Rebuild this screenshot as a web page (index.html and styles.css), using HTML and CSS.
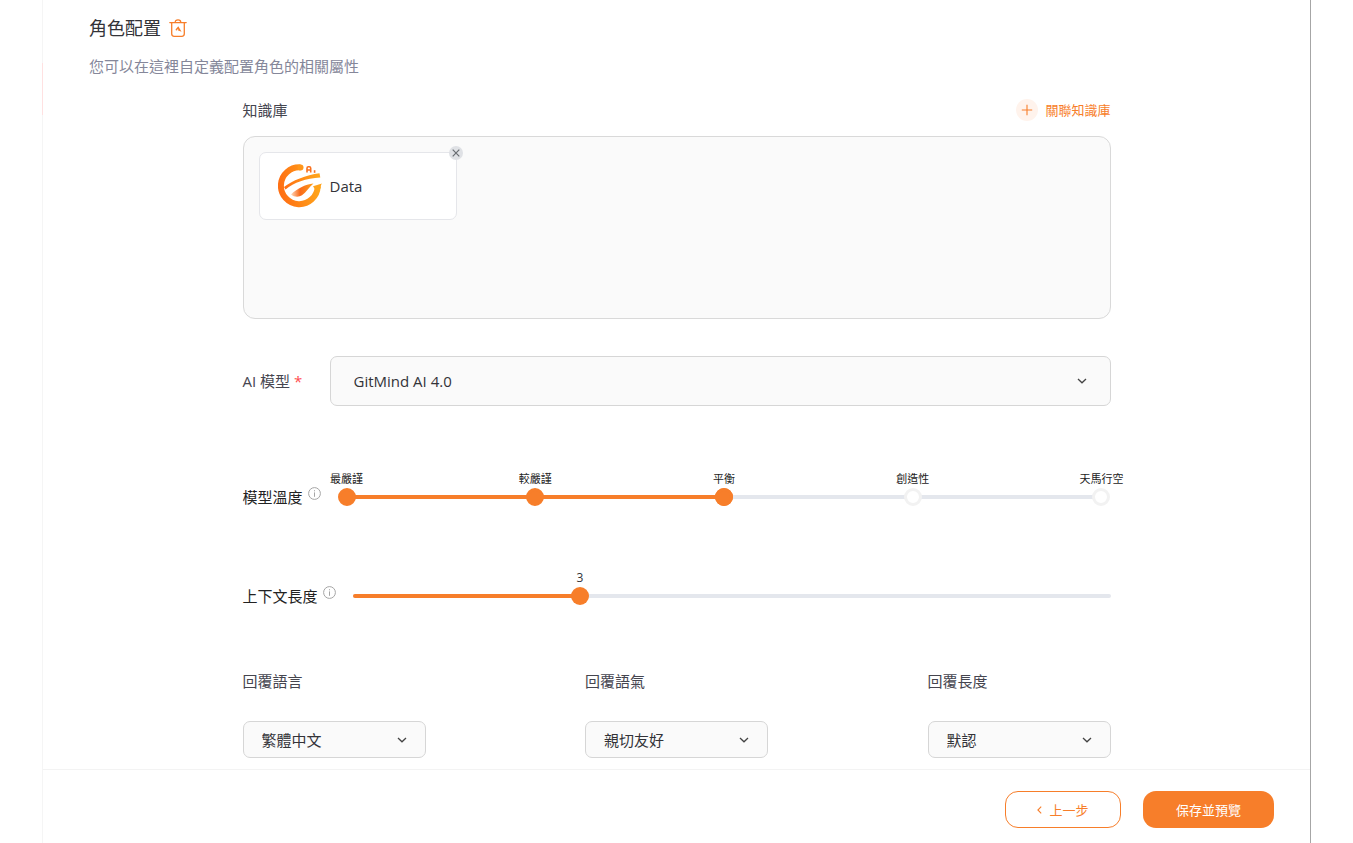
FILE: index.html
```html
<!DOCTYPE html>
<html lang="zh-Hant">
<head>
<meta charset="utf-8">
<meta name="viewport" content="width=device-width, initial-scale=1">
<title>角色配置</title>
<link rel="stylesheet" href="styles.css">
</head>
<body>
<div class="panel">
  <main class="content">
    <header class="heading">
      <div class="heading-row">
        <h1 class="title">角色配置</h1>
        <button class="icon-button" type="button" aria-label="清空配置">
          <svg width="18" height="18" viewBox="0 0 18 18" fill="none" stroke="#f77e2a" stroke-width="1.3" stroke-linecap="round">
            <path d="M0.8 3.6H17.2M2.7 3.8V14.8Q2.7 17.3 5.2 17.3H12.8Q15.3 17.3 15.3 14.8V3.8M6.2 3.4Q6.2 0.8 9 0.8T11.8 3.4"/>
            <path d="M7.3 10.8L9.2 8.4L11 11.4L9.5 10.9" stroke-width="1.4"/>
          </svg>
        </button>
      </div>
      <p class="subtitle">您可以在這裡自定義配置角色的相關屬性</p>
    </header>

    <form class="form" id="role-form">
      <section class="knowledge">
        <div class="knowledge-head">
          <h2 class="label">知識庫</h2>
          <button class="link-button" type="button">
            <span class="plus"><svg width="12" height="12" viewBox="0 0 12 12" stroke="#f77e2a" stroke-width="1.1"><path d="M6 0.8V11.2M0.8 6H11.2"/></svg></span>
            關聯知識庫
          </button>
        </div>
        <div class="knowledge-box">
          <div class="card">
            <svg class="logo" width="44" height="44" viewBox="0 0 44 44" fill="none">
              <defs>
                <linearGradient id="ring" x1="0" y1="0.6" x2="1" y2="0.4"><stop offset="0" stop-color="#ff7014"/><stop offset="1" stop-color="#ffa51a"/></linearGradient>
                <linearGradient id="leaf" x1="0" y1="0" x2="1" y2="0"><stop offset="0" stop-color="#ffd9bd"/><stop offset="0.4" stop-color="#f96a1b"/><stop offset="1" stop-color="#ffa01a"/></linearGradient>
              </defs>
              <path d="M22.5 3.4A18.4 18.4 0 1 0 39.7 22.5" stroke="url(#ring)" stroke-width="6"/>
              <circle cx="22.5" cy="3.4" r="3" fill="#ff961a"/>
              <path d="M6 23C14 16.5 28 11 41.5 9.2L42.3 13.6C28 14.6 16 18.5 7.5 25.5Z" fill="url(#ring)"/>
              <path d="M35 22.3L44 19.6C42.8 20.8 42.7 22.5 42.7 24.5H36.5Z" fill="#ffa31a"/>
              <path d="M13 30.5C19 24.5 27 20.5 35.5 19.5C31.5 22.5 28 28.5 24 31.3C20.5 33.5 16 33 13 30.5Z" fill="url(#leaf)"/>
              <path d="M29 8.5V4.2Q29 2.8 30.4 2.8H31.3Q32.7 2.8 32.7 4.2V8.5M29 6H32.7" stroke="#f9701e" stroke-width="1.6"/>
              <path d="M36.6 6.2V8.8" stroke="#f9701e" stroke-width="1.6"/>
            </svg>
            <span>Data</span>
            <button class="remove" type="button" aria-label="移除 Data"><svg width="8" height="8" viewBox="0 0 8 8" stroke="#686c72" stroke-width="1.2"><path d="M0.7 0.7L7.3 7.3M7.3 0.7L0.7 7.3"/></svg></button>
          </div>
        </div>
      </section>

      <div class="model-row">
        <label class="label" for="model">AI 模型 <span class="required">*</span></label>
        <div class="select-wrap">
          <select class="select select-large" id="model"><option>GitMind AI 4.0</option></select>
          <svg class="chevron" width="10" height="6" viewBox="0 0 10 6"><path d="M1 1L5 4.8L9 1"/></svg>
        </div>
      </div>

      <div class="slider-row">
        <label class="slider-label" for="temperature">模型溫度
          <svg class="info" width="13" height="13" viewBox="0 0 13 13"><circle cx="6.5" cy="6.5" r="5.9"/><path d="M6.5 5.4V9.8M6.5 3.2V4.3"/></svg>
        </label>
        <div class="steps">
          <div class="bar steps-bar"><div class="fill" style="width:50%"></div></div>
          <input class="range" id="temperature" type="range" min="0" max="4" value="2">
          <div class="dots">
            <div class="dot dot-on"><span>最嚴謹</span></div>
            <div class="dot dot-on"><span>較嚴謹</span></div>
            <div class="dot dot-on"><span>平衡</span></div>
            <div class="dot"><span>創造性</span></div>
            <div class="dot"><span>天馬行空</span></div>
          </div>
        </div>
      </div>

      <div class="slider-row">
        <label class="slider-label" for="context">上下文長度
          <svg class="info" width="13" height="13" viewBox="0 0 13 13"><circle cx="6.5" cy="6.5" r="5.9"/><path d="M6.5 5.4V9.8M6.5 3.2V4.3"/></svg>
        </label>
        <div class="continuous">
          <div class="bar"><div class="fill" style="width:30%"><output class="value" for="context">3</output></div></div>
          <input class="range range-wide" id="context" type="range" min="0" max="10" value="3">
        </div>
      </div>

      <div class="replies">
        <div class="field">
          <label class="label" for="language">回覆語言</label>
          <div class="select-wrap">
            <select class="select" id="language"><option>繁體中文</option></select>
            <svg class="chevron" width="10" height="6" viewBox="0 0 10 6"><path d="M1 1L5 4.8L9 1"/></svg>
          </div>
        </div>
        <div class="field">
          <label class="label" for="tone">回覆語氣</label>
          <div class="select-wrap">
            <select class="select" id="tone"><option>親切友好</option></select>
            <svg class="chevron" width="10" height="6" viewBox="0 0 10 6"><path d="M1 1L5 4.8L9 1"/></svg>
          </div>
        </div>
        <div class="field">
          <label class="label" for="length">回覆長度</label>
          <div class="select-wrap">
            <select class="select" id="length"><option>默認</option></select>
            <svg class="chevron" width="10" height="6" viewBox="0 0 10 6"><path d="M1 1L5 4.8L9 1"/></svg>
          </div>
        </div>
      </div>
    </form>
  </main>

  <footer class="footer">
    <button class="button button-back" type="button"><svg width="5" height="8" viewBox="0 0 5 8" fill="none" stroke="#f77e2a" stroke-width="1.1"><path d="M4.2 0.6L0.9 4L4.2 7.4"/></svg>上一步</button>
    <button class="button button-save" type="submit" form="role-form">保存並預覽</button>
  </footer>
</div>
</body>
</html>
```
FILE: styles.css
```css
* {
  box-sizing: border-box;
}

body {
  margin: 0;
  background: #fff;
  color: #333338;
  font-family: "Open Sans", "Noto Sans CJK TC", sans-serif;
  font-size: 15px;
  line-height: 20px;
}

h1, h2, p {
  margin: 0;
  font-weight: 400;
}

button {
  padding: 0;
  border: 0;
  background: none;
  font: inherit;
  cursor: pointer;
}

.panel {
  position: relative;
  display: flex;
  flex-direction: column;
  height: 100vh;
  margin: 0 42px;
  border-left: 1px solid #f5f5f5;
  border-right: 1px solid #a6a6a6;
}

.panel::before {
  content: "";
  position: absolute;
  left: -1px;
  top: 63px;
  width: 1px;
  height: 52px;
  background: #ffe1e1;
}

.content {
  flex: 1;
  min-height: 0;
  overflow: hidden;
}

.heading {
  padding: 16px 46px 0;
}

.heading-row {
  display: flex;
  align-items: center;
  gap: 8px;
}

.title {
  font-size: 18px;
  line-height: 24px;
}

.icon-button {
  display: flex;
}

.subtitle {
  margin-top: 16px;
  color: #85879a;
}

.form {
  max-width: 868px;
  margin: 22px auto 0;
}

.label {
  color: #45454f;
  font-size: 15px;
}

.knowledge-head {
  display: flex;
  justify-content: space-between;
  align-items: center;
  height: 24px;
}

.link-button {
  display: flex;
  align-items: center;
  gap: 7px;
  color: #f77e2a;
  font-size: 13px;
}

.plus {
  display: grid;
  place-items: center;
  width: 22px;
  height: 22px;
  border-radius: 50%;
  background: #fff3ec;
}

.knowledge-box {
  min-height: 183px;
  margin-top: 14px;
  padding: 15px;
  border: 1px solid #d9d9d9;
  border-radius: 12px;
  background: #fafafa;
}

.card {
  position: relative;
  display: flex;
  align-items: center;
  gap: 8px;
  width: 198px;
  height: 68px;
  padding-left: 18px;
  border: 1px solid #e5e6ea;
  border-radius: 7px;
  background: #fff;
}

.remove {
  position: absolute;
  top: -7px;
  right: -7px;
  display: grid;
  place-items: center;
  width: 14px;
  height: 14px;
  border-radius: 50%;
  background: #dfe1e5;
}

.model-row {
  display: flex;
  align-items: center;
  margin-top: 37px;
}

.model-row .label {
  width: 87px;
}

.model-row .select-wrap {
  flex: 1;
}

.required {
  color: #ff4d4f;
}

.select-wrap {
  position: relative;
  display: flex;
}

.select {
  appearance: none;
  width: 100%;
  height: 37px;
  padding: 0 18px;
  border: 1px solid #d6d6d6;
  border-radius: 7px;
  background: #fafafa;
  color: #333338;
  font: inherit;
}

.select-large {
  height: 50px;
  padding: 0 23px;
}

.chevron {
  position: absolute;
  top: calc(50% - 3px);
  right: 19px;
  fill: none;
  stroke: #444;
  stroke-width: 1.3;
  pointer-events: none;
}

.select-large + .chevron {
  right: 24px;
}

.slider-row {
  display: flex;
  align-items: center;
  height: 20px;
  margin-top: 79px;
}

.model-row + .slider-row {
  margin-top: 81px;
}

.slider-label {
  display: flex;
  align-items: flex-start;
  gap: 5px;
  color: #222;
}

.info {
  fill: none;
  stroke: #a5a5a5;
}

.steps,
.continuous {
  position: relative;
  flex: 1;
  display: flex;
  align-items: center;
  height: 20px;
  margin-left: 17px;
}

.bar {
  flex: 1;
  height: 4px;
  border-radius: 2px;
  background: #e4e7ed;
}

.steps-bar {
  margin: 0 9px;
}

.fill {
  position: relative;
  height: 4px;
  border-radius: 2px;
  background: #f77e2a;
}

.range {
  appearance: none;
  position: absolute;
  left: 0;
  width: 100%;
  height: 18px;
  margin: 0;
  background: transparent;
}

.range-wide {
  left: -9px;
  width: calc(100% + 18px);
}

.range::-webkit-slider-thumb {
  appearance: none;
  width: 18px;
  height: 18px;
  border-radius: 50%;
  background: #f77e2a;
}

.dots {
  position: absolute;
  left: 0;
  right: 0;
  display: flex;
  justify-content: space-between;
  pointer-events: none;
}

.dot {
  display: flex;
  justify-content: center;
  width: 18px;
  height: 18px;
  border: 3px solid #f2f2f2;
  border-radius: 50%;
  background: #fff;
}

.dot-on {
  border-color: #f77e2a;
  background: #f77e2a;
}

.dot span {
  flex: none;
  height: 16px;
  margin-top: -20px;
  color: #222;
  font-size: 11px;
  line-height: 16px;
  white-space: nowrap;
}

.value {
  position: absolute;
  right: -12px;
  bottom: 12px;
  width: 24px;
  font-size: 12px;
  line-height: 16px;
  text-align: center;
}

.replies {
  display: flex;
  justify-content: space-between;
  margin-top: 65px;
}

.field {
  display: flex;
  flex-direction: column;
  gap: 30px;
  width: 183px;
}

.footer {
  display: flex;
  justify-content: flex-end;
  align-items: center;
  gap: 22px;
  height: 74px;
  padding: 6px 36px 0 0;
  border-top: 1px solid #f3f3f3;
}

.button {
  display: flex;
  justify-content: center;
  align-items: center;
  gap: 7px;
  height: 37px;
  border-radius: 13px;
  font-size: 13px;
}

.button-back {
  width: 116px;
  border: 1px solid #f77e2a;
  color: #f77e2a;
}

.button-save {
  width: 131px;
  background: #f77e2a;
  color: #fff;
}
```
